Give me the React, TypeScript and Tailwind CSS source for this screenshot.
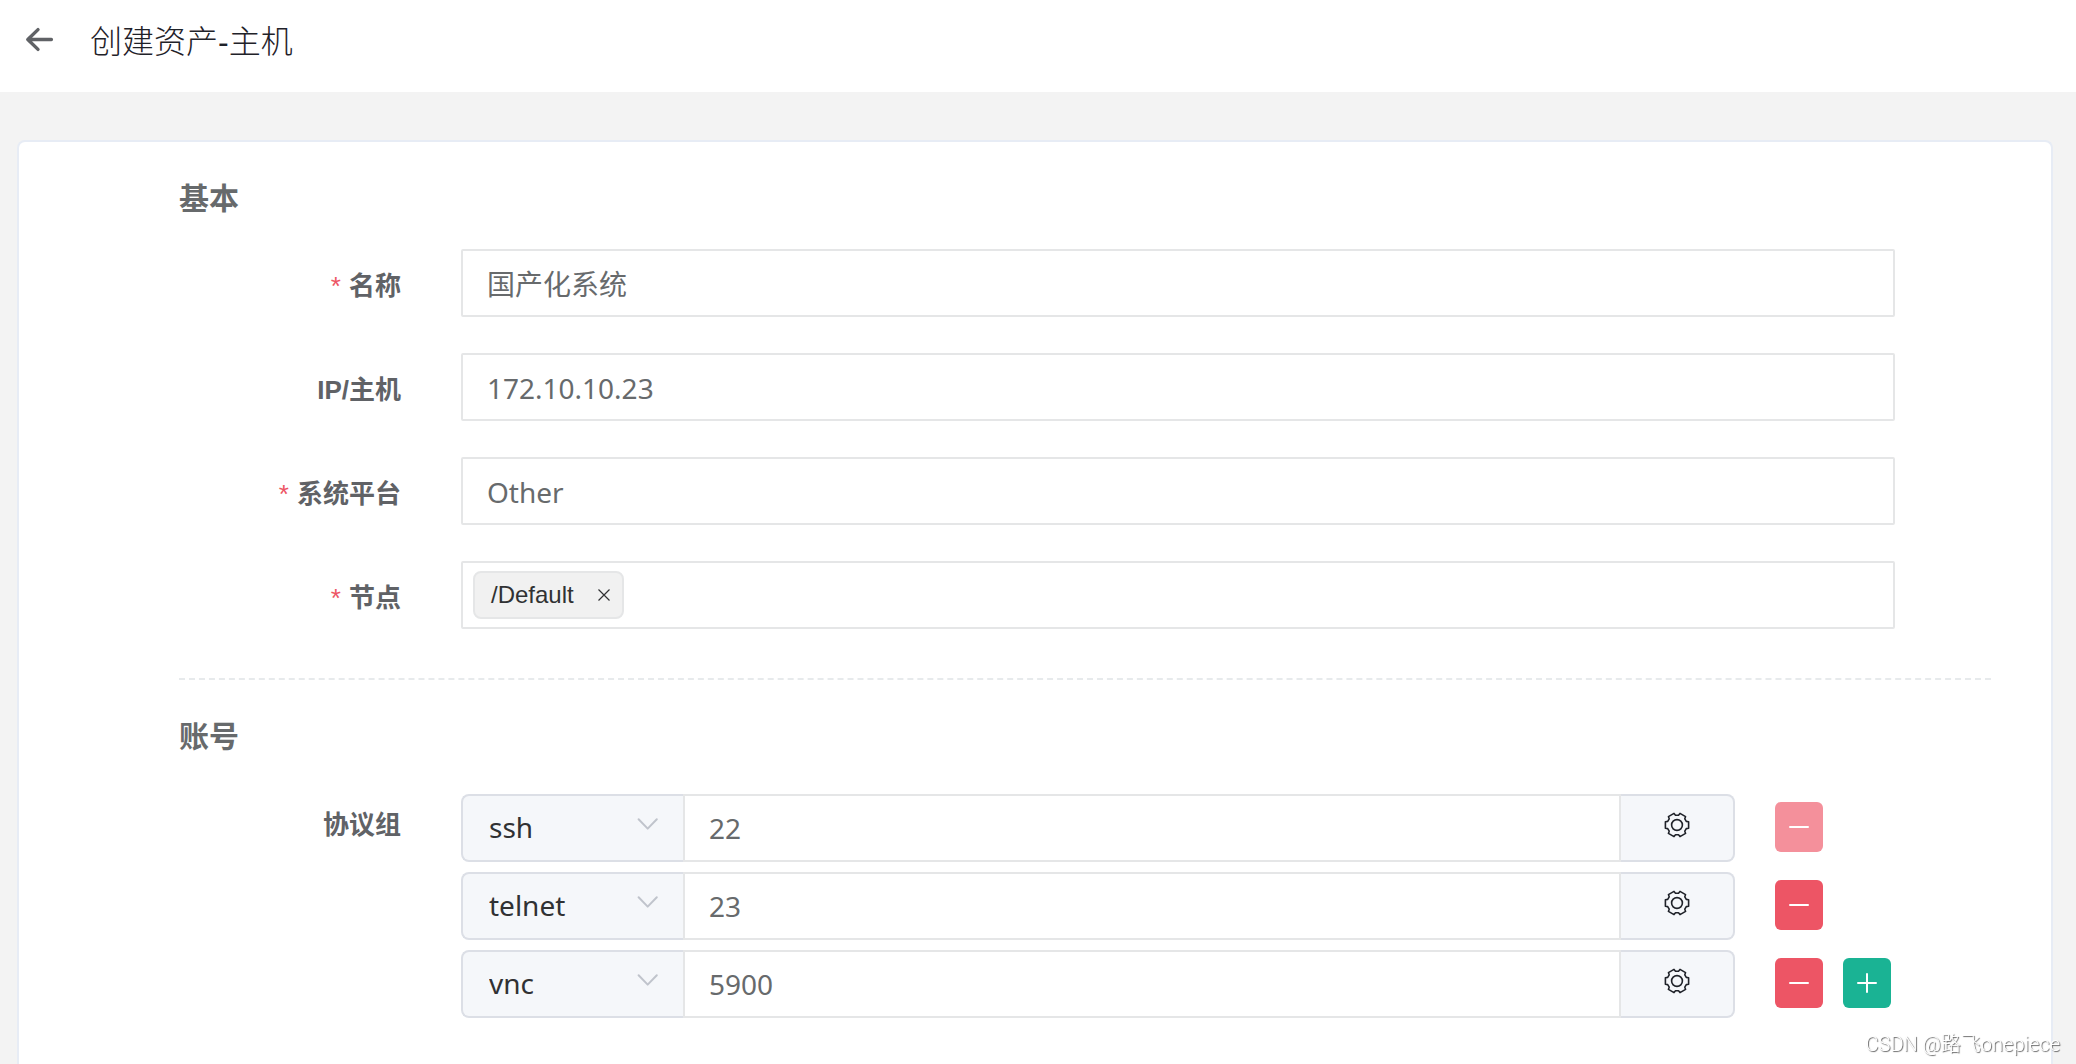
import { useState } from 'react';

interface Protocol {
  name: string;
  port: string;
}

const protocolOptions = ['ssh', 'telnet', 'vnc', 'rdp'];

const initialProtocols: Protocol[] = [
  { name: 'ssh', port: '22' },
  { name: 'telnet', port: '23' },
  { name: 'vnc', port: '5900' },
];

const inputStyles =
  "block h-[68px] w-full rounded-xs border-2 border-[#e5e6e7] bg-white px-6 pt-0.5 font-['Noto_Sans','Noto_Sans_CJK_SC',sans-serif] text-[28px] text-[#676a6c] outline-none focus:border-[#1ab394]";

function ArrowLeftIcon() {
  return (
    <svg className="h-8 w-8" viewBox="0 0 32 32" fill="none" stroke="currentColor" strokeWidth="3.4" strokeLinecap="round" strokeLinejoin="round">
      <path d="M27.4 15.5H4M14 5.6 3.8 15.5 14 25.4" />
    </svg>
  );
}

function GearIcon() {
  return (
    <svg className="h-[26px] w-[26px]" viewBox="-13 -13 26 26" fill="none" stroke="currentColor" strokeWidth="1.6" strokeLinejoin="round">
      <path d="M9.3-3.6 11.6-3.2V3.2L9.3 3.6 7.8 6.2 8.6 8.4 3 11.6 1.5 9.8H-1.5L-3 11.6-8.6 8.4-7.8 6.2-9.3 3.6-11.6 3.2V-3.2L-9.3-3.6-7.8-6.2-8.6-8.4-3-11.6-1.5-9.8H1.5L3-11.6 8.6-8.4 7.8-6.2Z" />
      <circle r="5.4" />
    </svg>
  );
}

function ChevronIcon() {
  return (
    <svg className="pointer-events-none absolute right-6 top-5 h-5 w-6 text-[#c0c4cc]" viewBox="0 0 24 20" fill="none" stroke="currentColor" strokeWidth="2" strokeLinecap="round" strokeLinejoin="round">
      <path d="m3.6 5.2 9.1 9.4 9.1-9.4" />
    </svg>
  );
}

interface FormRowProps {
  label: string;
  htmlFor: string;
  required?: boolean;
  children: React.ReactNode;
}

function FormRow({ label, htmlFor, required, children }: FormRowProps) {
  return (
    <div className="mr-24 flex gap-[60px]">
      <label
        htmlFor={htmlFor}
        className="h-16 w-[222px] shrink-0 text-right text-[26px] leading-[inherit] font-bold text-[#606266]"
      >
        {required && <span className="mr-2 font-normal text-[#ed5565]">*</span>}
        {label}
      </label>
      <div className="min-w-0 flex-1">{children}</div>
    </div>
  );
}

export default function App() {
  const [name, setName] = useState('国产化系统');
  const [address, setAddress] = useState('172.10.10.23');
  const [platform, setPlatform] = useState('Other');
  const [nodes, setNodes] = useState(['/Default']);
  const [protocols, setProtocols] = useState(initialProtocols);

  const updateProtocol = (index: number, patch: Partial<Protocol>) => {
    setProtocols(protocols.map((item, i) => (i === index ? { ...item, ...patch } : item)));
  };

  const removeProtocol = (index: number) => {
    setProtocols(protocols.filter((_, i) => i !== index));
  };

  return (
    <div className="flex min-h-screen flex-col bg-[#f3f3f3] font-['Liberation_Sans','Noto_Sans_CJK_SC',sans-serif]">
      {/* Header */}
      <header className="flex h-[92px] items-start gap-[34px] bg-white pt-6 pl-6">
        <button type="button" aria-label="返回" className="text-[#606266]">
          <ArrowLeftIcon />
        </button>
        <h1 className="text-[32px] leading-9 font-light text-[#1f2229]">创建资产-主机</h1>
      </header>

      <main className="flex flex-1 flex-col pt-12 pr-[23px] pl-[17px]">
        <form className="flex-1 rounded-t-lg border-2 border-b-0 border-[#e7ecf5] bg-white pt-9 pr-[60px] pl-40">
          {/* Basic */}
          <section>
            <h2 className="text-[30px] leading-[42px] font-bold text-[#676a6c]">基本</h2>
            <div className="mt-[29px] space-y-9 leading-[74px]">
              <FormRow label="名称" htmlFor="name" required>
                <input id="name" className={inputStyles} value={name} onChange={(e) => setName(e.target.value)} />
              </FormRow>
              <FormRow label="IP/主机" htmlFor="address">
                <input id="address" className={inputStyles} value={address} onChange={(e) => setAddress(e.target.value)} />
              </FormRow>
              <FormRow label="系统平台" htmlFor="platform" required>
                <input id="platform" className={inputStyles} value={platform} onChange={(e) => setPlatform(e.target.value)} />
              </FormRow>
              <FormRow label="节点" htmlFor="nodes" required>
                <div className="flex h-[68px] items-start gap-2 rounded-xs border-2 border-[#e5e6e7] px-[10px] pt-2">
                  {nodes.map((node) => (
                    <span key={node} className="flex h-12 items-center gap-6 rounded-lg border-2 border-[#e5e6e7] bg-[#f1f1f1] pr-3 pl-4 text-[24px] leading-7 text-[#303133]">
                      {node}
                      <button type="button" aria-label={`移除 ${node}`} onClick={() => setNodes(nodes.filter((n) => n !== node))}>
                        <svg className="h-3 w-3" viewBox="0 0 12 12" fill="none" stroke="currentColor" strokeWidth="1.2">
                          <path d="m.5.5 11 11M11.5.5l-11 11" />
                        </svg>
                      </button>
                    </span>
                  ))}
                  <input id="nodes" className="h-12 min-w-0 flex-1 text-[24px] outline-none" />
                </div>
              </FormRow>
            </div>
          </section>

          <hr className="mt-[49px] border-t-2 border-dashed border-[#e7eaec]" />

          {/* Accounts */}
          <section className="pt-9">
            <h2 className="text-[30px] leading-[42px] font-bold text-[#676a6c]">账号</h2>
            <div className="mt-9 leading-[62px]">
              <FormRow label="协议组" htmlFor="protocol-0">
                <div className="space-y-[10px] font-['Noto_Sans','Noto_Sans_CJK_SC',sans-serif]">
                  {protocols.map((item, index) => (
                    <div key={index} className="flex gap-10">
                      <div className="flex h-[68px] min-w-0 flex-1">
                        <div className="relative w-[222px] shrink-0">
                          <select
                            id={`protocol-${index}`}
                            aria-label="协议"
                            className="block h-full w-full appearance-none rounded-l-lg border-2 border-r-0 border-[#dcdfe6] bg-[#f5f7fa] px-[26px] pb-1 text-[28px] text-[#303133] outline-none"
                            value={item.name}
                            onChange={(e) => updateProtocol(index, { name: e.target.value })}
                          >
                            {protocolOptions.map((option) => (
                              <option key={option}>{option}</option>
                            ))}
                          </select>
                          <ChevronIcon />
                        </div>
                        <input
                          aria-label="端口"
                          className="min-w-0 flex-1 border-2 border-[#e5e6e7] bg-white px-6 text-[28px] text-[#676a6c] outline-none"
                          value={item.port}
                          onChange={(e) => updateProtocol(index, { port: e.target.value })}
                        />
                        <button
                          type="button"
                          aria-label="协议设置"
                          className="flex w-[114px] shrink-0 justify-center rounded-r-lg border-2 border-l-0 border-[#dcdfe6] bg-[#f5f7fa] pt-4 text-[#1f2229]"
                        >
                          <GearIcon />
                        </button>
                      </div>
                      <div className="flex w-[120px] shrink-0 gap-5 pt-2">
                        <button
                          type="button"
                          aria-label="删除协议"
                          disabled={index === 0}
                          className="flex h-[50px] w-12 items-center justify-center rounded-md bg-[#ed5565] text-white disabled:bg-[#f4909b]"
                          onClick={() => removeProtocol(index)}
                        >
                          <svg className="h-5 w-5" viewBox="0 0 20 20" stroke="currentColor" strokeWidth="2" strokeLinecap="round">
                            <path d="M1 10h18" />
                          </svg>
                        </button>
                        {index === protocols.length - 1 && (
                          <button
                            type="button"
                            aria-label="添加协议"
                            className="flex h-[50px] w-12 items-center justify-center rounded-md bg-[#1ab394] text-white"
                            onClick={() => setProtocols([...protocols, { name: 'rdp', port: '3389' }])}
                          >
                            <svg className="h-5 w-5" viewBox="0 0 20 20" stroke="currentColor" strokeWidth="2" strokeLinecap="round">
                              <path d="M1 10h18M10 1v18" />
                            </svg>
                          </button>
                        )}
                      </div>
                    </div>
                  ))}
                </div>
              </FormRow>
            </div>
          </section>
        </form>
      </main>

      {/* Watermark */}
      <p className="pointer-events-none fixed right-4 bottom-1.5 font-['Roboto','Noto_Sans_CJK_SC',sans-serif] text-[20px] leading-7 font-light text-white [text-shadow:1px_1px_1px_#666]">
        CSDN @路飞onepiece
      </p>
    </div>
  );
}
